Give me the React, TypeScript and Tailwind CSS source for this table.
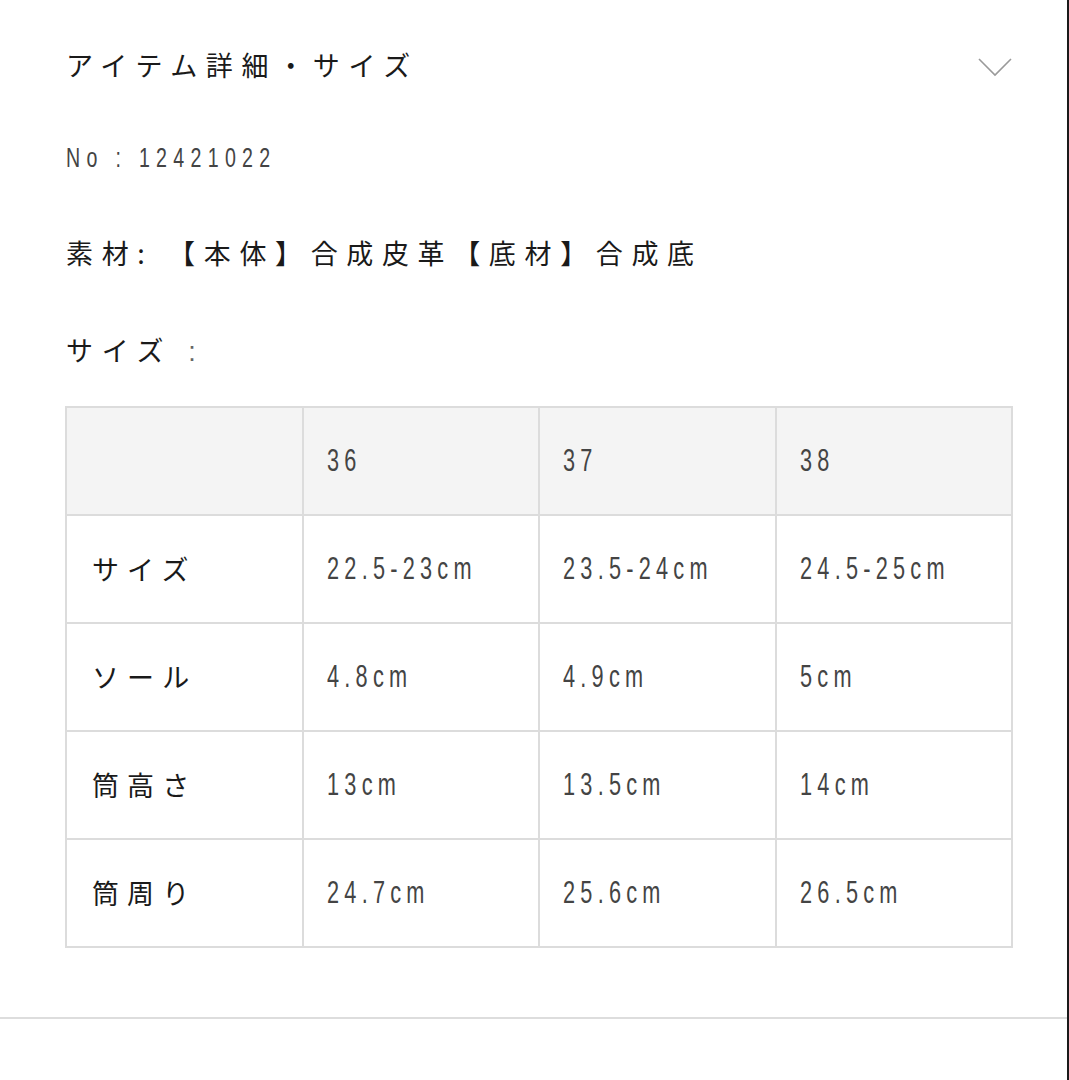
import React from "react"

const jp = "font-['Noto_Sans_CJK_JP','Noto_Sans',sans-serif]"
const num = "font-['Liberation_Sans',sans-serif]"

const sizes = ["36", "37", "38"]

const rows: { label: string; values: string[] }[] = [
    { label: "サイズ", values: ["22.5-23cm", "23.5-24cm", "24.5-25cm"] },
    { label: "ソール", values: ["4.8cm", "4.9cm", "5cm"] },
    { label: "筒高さ", values: ["13cm", "13.5cm", "14cm"] },
    { label: "筒周り", values: ["24.7cm", "25.6cm", "26.5cm"] },
]

// condensed looking numbers (no condensed font installed)
function Narrow({ children, size = "text-[31px]" }: { children: React.ReactNode; size?: string }) {
    return (
        <span className={`${num} ${size} inline-block origin-left scale-x-[0.7] tracking-[7.5px] text-[#444] whitespace-nowrap`}>
            {children}
        </span>
    )
}

function Chevron() {
    return (
        <svg width="36" height="20" viewBox="0 0 36 20" fill="none">
            <path d="M2 2 L18 18 L34 2" stroke="#9a9a9a" strokeWidth="1.6" />
        </svg>
    )
}

export default function App() {
    return (
        <div className="w-[1069px] h-[1080px] bg-white border-r-2 border-[#1a1a1a] overflow-hidden">
            <div className="pl-[66px] pr-[54px]">
                {/* header */}
                <div className="mt-[45px] h-[40px] flex items-center justify-between">
                    <h2 className={`${jp} text-[27px] leading-[40px] tracking-[0.32em] text-[#1a1a1a]`}>
                        アイテム詳細・サイズ
                    </h2>
                    <div className="pt-[4px]">
                        <Chevron />
                    </div>
                </div>

                <p className="mt-[53px] h-[40px] leading-[40px]">
                    <Narrow size="text-[28px] tracking-[9px]">No : 12421022</Narrow>
                </p>

                <p className={`${jp} mt-[55px] h-[40px] leading-[40px] text-[27px] tracking-[0.32em] text-[#1a1a1a]`}>
                    素材: 【本体】合成皮革【底材】合成底
                </p>

                <p className={`${jp} mt-[57px] h-[40px] leading-[40px] text-[27px] tracking-[0.32em] text-[#1a1a1a]`}>
                    サイズ<span className={`${num} text-[#666]`}> :</span>
                </p>

                <table className="mt-[36px] w-[948px] border-collapse border-2 border-[#dcdcdc] table-fixed -ml-[1px]">
                    <thead>
                        <tr className="h-[108px] bg-[#f4f4f4]">
                            <th className="border-2 border-[#dcdcdc] w-[237px]"></th>
                            {sizes.map((s) => (
                                <th key={s} className="border-2 border-[#dcdcdc] text-left font-normal pl-[23px]">
                                    <Narrow>{s}</Narrow>
                                </th>
                            ))}
                        </tr>
                    </thead>
                    <tbody>
                        {rows.map((r) => (
                            <tr key={r.label} className="h-[108px]">
                                <td className={`${jp} border-2 border-[#dcdcdc] pl-[25px] text-[27px] tracking-[0.3em] text-[#1a1a1a]`}>
                                    {r.label}
                                </td>
                                {r.values.map((v, i) => (
                                    <td key={i} className="border-2 border-[#dcdcdc] pl-[23px]">
                                        <Narrow>{v}</Narrow>
                                    </td>
                                ))}
                            </tr>
                        ))}
                    </tbody>
                </table>
            </div>

            <div className="mt-[69px] h-[2px] bg-[#dddddd]" />
        </div>
    )
}
